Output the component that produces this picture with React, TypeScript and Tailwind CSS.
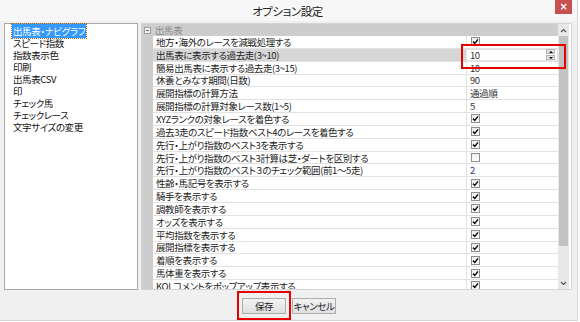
import React from "react";

type Row = { label: string; value: string | boolean; spin?: boolean };

const menu = [
  "出馬表・ナビグラフ",
  "スピード指数",
  "指数表示色",
  "印刷",
  "出馬表CSV",
  "印",
  "チェック馬",
  "チェックレース",
  "文字サイズの変更",
];

const rows: Row[] = [
  { label: "地方・海外のレースを減戦処理する", value: true },
  { label: "出馬表に表示する過去走(3~10)", value: "10", spin: true },
  { label: "簡易出馬表に表示する過去走(3~15)", value: "10" },
  { label: "休養とみなす期間(日数)", value: "90" },
  { label: "展開指標の計算方法", value: "通過順" },
  { label: "展開指標の計算対象レース数(1~5)", value: "5" },
  { label: "XYZランクの対象レースを着色する", value: true },
  { label: "過去3走のスピード指数ベスト4のレースを着色する", value: true },
  { label: "先行・上がり指数のベスト3を表示する", value: true },
  { label: "先行・上がり指数のベスト3計算は芝・ダートを区別する", value: false },
  { label: "先行・上がり指数のベスト３のチェック範囲(前1～5走)", value: "2" },
  { label: "性齢・馬記号を表示する", value: true },
  { label: "騎手を表示する", value: true },
  { label: "調教師を表示する", value: true },
  { label: "オッズを表示する", value: true },
  { label: "平均指数を表示する", value: true },
  { label: "展開指標を表示する", value: true },
  { label: "着順を表示する", value: true },
  { label: "馬体重を表示する", value: true },
  { label: "KOLコメントをポップアップ表示する", value: true },
];

const jp =
  "font-['Noto_Sans_CJK_JP','Noto_Sans',sans-serif] [font-feature-settings:'palt'] tracking-[-0.4px]";

function CheckBox({ checked }: { checked: boolean }) {
  return (
    <div className="w-[9px] h-[9px] border border-[#8e8e8e] bg-gradient-to-b from-[#ececec] to-white flex items-center justify-center">
      {checked && (
        <svg width="7" height="7" viewBox="0 0 7 7">
          <path d="M1 3.6 L2.8 5.4 L6 1.4" stroke="#111" strokeWidth="1.5" fill="none" />
        </svg>
      )}
    </div>
  );
}

function Spinner() {
  return (
    <div className="flex flex-col w-[9px] h-[11px] gap-px">
      <div className="flex-1 bg-[#e4e4e4] border border-[#b5b5b5] flex items-center justify-center">
        <div className="w-0 h-0 border-l-[2px] border-r-[2px] border-b-[2px] border-l-transparent border-r-transparent border-b-black" />
      </div>
      <div className="flex-1 bg-[#e4e4e4] border border-[#b5b5b5] flex items-center justify-center">
        <div className="w-0 h-0 border-l-[2px] border-r-[2px] border-t-[2px] border-l-transparent border-r-transparent border-t-black" />
      </div>
    </div>
  );
}

export default function App() {
  return (
    <div className={`w-[580px] h-[322px] bg-white ${jp}`}>
      <div className="w-[578px] h-[321px] bg-[#f0f0f0] border-r border-b border-[#d6d6d6] flex flex-col">
        {/* title bar */}
        <div className="h-[22px] flex items-start bg-[#f7f7f7]">
          <div className="flex-1 pl-[20px] h-[21px] flex items-center justify-center text-[11.5px] leading-[14px] text-[#222]">
            オプション設定
          </div>
          <div className="w-[17px] h-[14px] bg-[#c75050] mr-[5px] flex items-center justify-center text-white text-[10px] font-['DejaVu_Sans',sans-serif] font-bold leading-none">
            ×
          </div>
        </div>

        {/* panels */}
        <div className="flex gap-[3px] pl-[4px] pr-[5px] pt-[2px] h-[269px]">
          <div className="w-[134px] bg-white border border-[#a9a9a9] pt-[1px] pl-[7px] text-[9.5px] leading-[12px] text-[#111]">
            {menu.map((m, i) =>
              i === 0 ? (
                <div key={m} className="h-[12px]">
                  <span className="bg-[#3399ff] text-white outline outline-1 outline-dotted outline-[#9a6a2a] px-px">
                    {m}
                  </span>
                </div>
              ) : (
                <div key={m} className="h-[12px] pl-px">
                  {m}
                </div>
              )
            )}
          </div>

          <div className="flex-1 bg-white border border-[#d4d4d4] flex overflow-hidden pr-[2px]">
            <div className="flex-1 flex flex-col overflow-hidden">
              <div className="h-[12px] shrink-0 bg-[#cdcdcd] flex items-center pl-[2px] gap-[4px] text-[9.5px] leading-[12px] text-[#8a8a8a]">
                <div className="w-[7px] h-[7px] border border-[#9c9c9c] bg-[#f4f4f4] flex items-center justify-center">
                  <div className="w-[3px] h-px bg-[#666]" />
                </div>
                出馬表
              </div>
              <div className="flex flex-1 overflow-hidden">
                <div className="w-[11px] shrink-0 bg-[#cdcdcd]" />
                <div className="flex-1 flex flex-col">
                  {rows.map((r) => (
                    <div
                      key={r.label}
                      className={`h-[12.85px] shrink-0 flex border-b border-[#e2e2e2] text-[9.5px] leading-[12px] ${
                        r.spin ? "bg-[#d6d6d6]" : "bg-white"
                      }`}
                    >
                      <div className="flex-1 flex items-center pl-[3px] text-[#222] whitespace-nowrap">
                        {r.label}
                      </div>
                      <div
                        className={`w-[92px] border-l border-[#e2e2e2] flex items-center pl-[3px] text-[#333] ${
                          r.spin ? "bg-white border border-[#c9c9c9] pr-[2px] justify-between" : "bg-white"
                        }`}
                      >
                        {typeof r.value === "boolean" ? (
                          <div className="pl-[1px]">
                            <CheckBox checked={r.value} />
                          </div>
                        ) : (
                          <span className={r.value === "2" ? "text-[#1a3c8a]" : ""}>{r.value}</span>
                        )}
                        {r.spin && <Spinner />}
                      </div>
                    </div>
                  ))}
                </div>
              </div>
            </div>
            {/* scrollbar */}
            <div className="w-[11px] shrink-0 bg-[#e8e8e8] flex flex-col items-center">
              <div className="h-[12px] w-full flex items-center justify-center">
                <svg width="7" height="5" viewBox="0 0 7 5">
                  <path d="M1 4 L3.5 1.5 L6 4" stroke="#555" strokeWidth="1.2" fill="none" />
                </svg>
              </div>
              <div className="w-[9px] h-[210px] bg-[#c2c2c2]" />
              <div className="flex-1" />
              <div className="h-[12px] w-full flex items-center justify-center">
                <svg width="7" height="5" viewBox="0 0 7 5">
                  <path d="M1 1 L3.5 3.5 L6 1" stroke="#555" strokeWidth="1.2" fill="none" />
                </svg>
              </div>
            </div>
          </div>
        </div>

        {/* buttons */}
        <div className="flex-1 flex justify-center items-start pt-[1px] gap-[1px] pr-[4px]">
          <div className="border-2 border-[#e60000] px-[3px] pt-[5px] pb-[4px]">
            <div className="w-[44px] h-[16px] border border-[#adadad] bg-gradient-to-b from-[#f2f2f2] to-[#e0e0e0] flex items-center justify-center text-[9.5px] leading-[12px] text-[#222]">
              保存
            </div>
          </div>
          <div className="pt-[7px]">
            <div className="w-[44px] h-[16px] border border-[#adadad] bg-gradient-to-b from-[#f2f2f2] to-[#e0e0e0] flex items-center justify-center text-[9.5px] leading-[12px] text-[#222]">
              キャンセル
            </div>
          </div>
        </div>
      </div>

      {/* red highlight over the spin field */}
      <div className="absolute left-[461px] top-[44px] w-[105px] h-[25px] border-2 border-[#e60000] pointer-events-none" />
    </div>
  );
}
